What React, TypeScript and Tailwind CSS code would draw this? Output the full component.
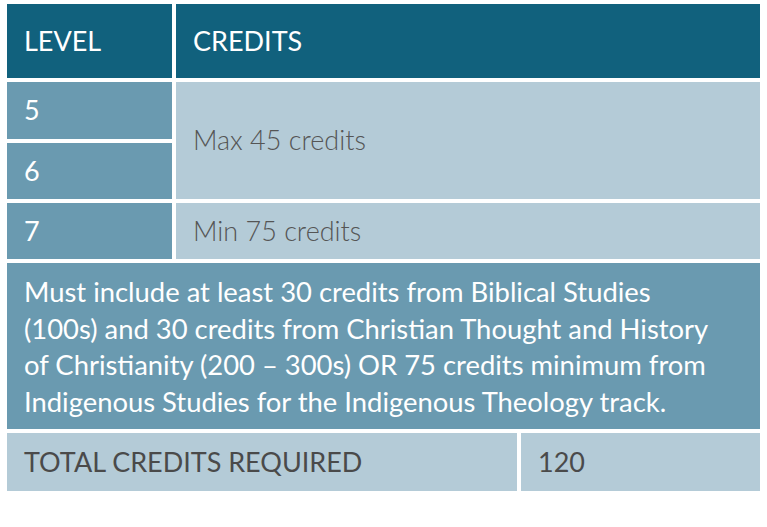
import React from 'react';

const App = () => {
  return (
    <div className="min-h-screen bg-white pt-1 pl-[7px]" style={{ fontFamily: 'Lato, "Open Sans", sans-serif' }}>
      <div className="w-[753px] flex flex-col gap-1">
        {/* header */}
        <div className="grid grid-cols-[165px_1fr] gap-1 h-[74px]">
          <div className="bg-[#11617d] text-white text-[27px] flex items-center pl-[17px]">LEVEL</div>
          <div className="bg-[#11617d] text-white text-[27px] flex items-center pl-[17px]">CREDITS</div>
        </div>

        {/* levels */}
        <div className="grid grid-cols-[165px_1fr] grid-rows-[57px_56px_56px] gap-1">
          <div className="bg-[#6a9ab0] text-white text-[27px] flex items-center pl-[17px]">5</div>
          <div className="row-span-2 bg-[#b4cbd7] text-[#555] font-light text-[27px] flex items-center pl-[17px]">
            Max 45 credits
          </div>
          <div className="bg-[#6a9ab0] text-white text-[27px] flex items-center pl-[17px]">6</div>
          <div className="bg-[#6a9ab0] text-white text-[27px] flex items-center pl-[17px]">7</div>
          <div className="bg-[#b4cbd7] text-[#555] font-light text-[27px] flex items-center pl-[17px]">
            Min 75 credits
          </div>
        </div>

        {/* note */}
        <div className="bg-[#6a9ab0] text-white text-[27.4px] leading-[36.5px] h-[166px] pl-[17px] pr-[30px] pt-[11px]">
          Must include at least 30 credits from Biblical Studies (100s) and 30 credits from Christian Thought and History
          of Christianity (200 – 300s) OR 75 credits minimum from Indigenous Studies for the Indigenous Theology track.
        </div>

        {/* total */}
        <div className="grid grid-cols-[510px_1fr] gap-1 h-[58px]">
          <div className="bg-[#b4cbd7] text-[#4a4a4a] text-[27px] flex items-center pl-[17px]">TOTAL CREDITS REQUIRED</div>
          <div className="bg-[#b4cbd7] text-[#4a4a4a] text-[27px] flex items-center pl-[17px]">120</div>
        </div>
      </div>
    </div>
  );
};

export default App;
